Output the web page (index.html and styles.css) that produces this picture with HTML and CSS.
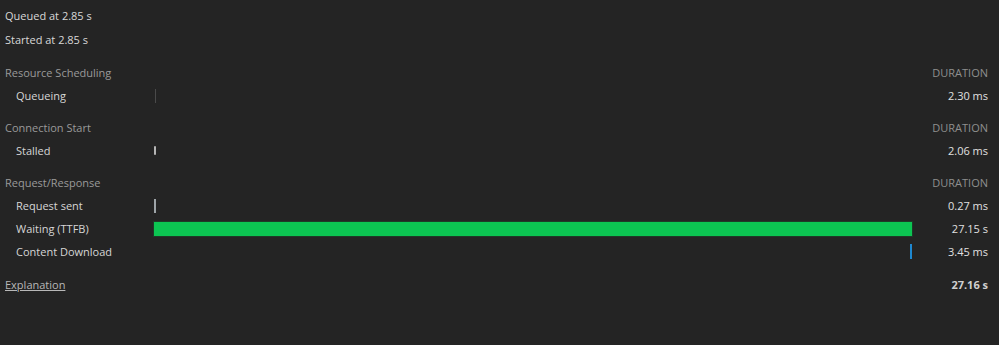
FILE: index.html
```html
<!DOCTYPE html>
<html>
<head>
<meta charset="utf-8">
<link rel="stylesheet" href="styles.css">
</head>
<body>
<div class="panel">
  <div class="meta">Queued at 2.85 s</div>
  <div class="meta">Started at 2.85 s</div>

  <div class="timing">
    <div class="row section"><span class="label">Resource Scheduling</span><span></span><span class="dur head">DURATION</span></div>
    <div class="row"><span class="label sub">Queueing</span><span class="track"><span class="bar queue" style="margin-left:1px;width:1px"></span></span><span class="dur">2.30 ms</span></div>

    <div class="row section"><span class="label">Connection Start</span><span></span><span class="dur head">DURATION</span></div>
    <div class="row"><span class="label sub">Stalled</span><span class="track"><span class="bar stalled" style="width:2px"></span></span><span class="dur">2.06 ms</span></div>

    <div class="row section"><span class="label">Request/Response</span><span></span><span class="dur head">DURATION</span></div>
    <div class="row"><span class="label sub">Request sent</span><span class="track"><span class="bar sent" style="width:2px"></span></span><span class="dur">0.27 ms</span></div>
    <div class="row"><span class="label sub">Waiting (TTFB)</span><span class="track"><span class="bar wait" style="width:758px"></span></span><span class="dur">27.15 s</span></div>
    <div class="row"><span class="label sub">Content Download</span><span class="track"><span class="bar download" style="margin-left:756px;width:2px"></span></span><span class="dur">3.45 ms</span></div>

    <div class="row total"><span class="label"><a class="explain" href="#">Explanation</a></span><span></span><span class="dur strong">27.16 s</span></div>
  </div>
</div>
</body>
</html>
```

FILE: styles.css
```css
html, body {
  margin: 0;
  padding: 0;
  background: #242424;
}
body {
  font-family: "Open Sans", "Noto Sans", sans-serif;
  font-size: 11px;
  color: #d6d6d6;
  width: 999px;
  height: 345px;
  overflow: hidden;
}
.panel {
  padding: 4px 11px 0 5px;
}
.meta {
  height: 24px;
  line-height: 24px;
  color: #d8d8d8;
}
.timing {
  margin-top: 9px;
}
.row {
  display: grid;
  grid-template-columns: 149px 758px 1fr;
  align-items: center;
  height: 23px;
}
.row.section {
  margin-top: 9px;
}
.timing .row.section:first-child {
  margin-top: 0;
}
.row.total {
  margin-top: 10px;
}
.label {
  color: #9a9a9a;
  white-space: nowrap;
}
.label.sub {
  padding-left: 11px;
  color: #d6d6d6;
}
.track {
  display: flex;
  align-items: center;
  height: 23px;
}
.bar {
  display: block;
  flex-shrink: 0;
  height: 14px;
}
.bar.queue {
  background: #4a4a4a;
}
.bar.stalled {
  background: #b5b5b5;
  height: 9px;
  border-radius: 1px;
}
.bar.sent {
  background: #9ea4a8;
  height: 14px;
}
.bar.wait {
  background: #0cc552;
  height: 14px;
  box-shadow: 0 0 0 1px #1e3a28;
}
.bar.download {
  background: #1e88d0;
  height: 15px;
}
.dur {
  text-align: right;
  color: #e0e0e0;
}
.dur.head {
  color: #8f8f8f;
}
.dur.strong {
  font-weight: 700;
  color: #d0d0d0;
}
.explain {
  color: #b8b8b8;
  text-decoration: underline;
}
```
